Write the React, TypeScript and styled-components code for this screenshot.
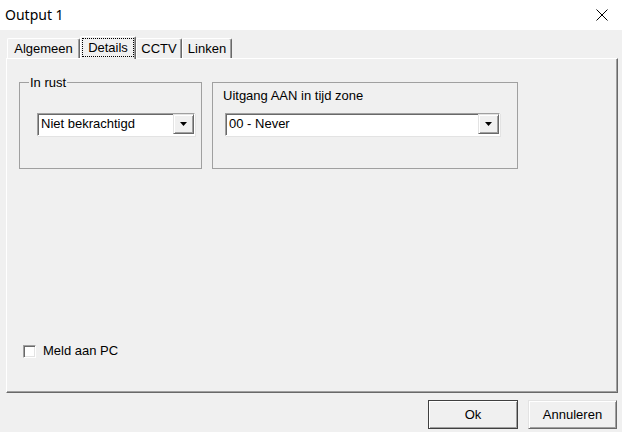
import React from 'react';
import styled, { createGlobalStyle } from 'styled-components';

const GlobalStyle = createGlobalStyle`
  body {
    margin: 0;
    font-family: "Liberation Sans", Arial, sans-serif;
    font-size: 13px;
    color: #000;
  }
  * {
    box-sizing: border-box;
  }
`;

const Window = styled.div`
  width: 622px;
  height: 432px;
  display: flex;
  flex-direction: column;
  background: #f0f0f0;
  overflow: hidden;
`;

const TitleBar = styled.div`
  height: 30px;
  background: #fff;
  display: flex;
  align-items: center;
  justify-content: space-between;
  padding: 0 14px 0 5px;
`;

const Title = styled.div`
  font-family: "Noto Sans", "Open Sans", sans-serif;
  font-size: 14px;
  line-height: 18px;
`;

const Body = styled.div`
  flex: 1;
  display: flex;
  flex-direction: column;
  padding: 6px 4px 0 6px;
`;

const TabStrip = styled.div`
  height: 22px;
  display: flex;
  align-items: flex-end;
  padding-left: 1px;
  position: relative;
  z-index: 1;
`;

const Tab = styled.div<{ $width: number; $active?: boolean }>`
  width: ${p => p.$width}px;
  height: ${p => (p.$active ? 23 : 20)}px;
  margin-bottom: ${p => (p.$active ? -1 : 0)}px;
  background: #f0f0f0;
  border-top: 1px solid #fff;
  border-left: 1px solid #fff;
  border-right: 1px solid #696969;
  box-shadow: inset -1px 0 0 #a0a0a0;
  border-radius: 2px 2px 0 0;
  display: flex;
  align-items: center;
  justify-content: center;
  padding: ${p => (p.$active ? '0 1px 2px 1px' : '0')};
  line-height: 15px;
  white-space: nowrap;
`;

const FocusLabel = styled.span`
  flex: 1;
  align-self: stretch;
  display: flex;
  align-items: center;
  justify-content: center;
  border: 1px dotted #000;
  margin: 1px 0 0 0;
`;

const Panel = styled.div`
  width: 612px;
  height: 335px;
  border-top: 1px solid #fff;
  border-left: 1px solid #fff;
  border-right: 1px solid #696969;
  border-bottom: 1px solid #696969;
  box-shadow: inset -1px -1px 0 #a0a0a0;
  display: flex;
  flex-direction: column;
  padding: 23px 0 33px 12px;
`;

const GroupRow = styled.div`
  display: flex;
  gap: 10px;
`;

const Group = styled.div<{ $width: number }>`
  position: relative;
  width: ${p => p.$width}px;
  height: 87px;
  border: 1px solid #a0a0a0;
  display: flex;
  flex-direction: column;
  align-items: flex-start;
`;

const Legend = styled.span`
  position: absolute;
  top: -8px;
  left: 9px;
  padding: 0 1px;
  background: #f0f0f0;
  line-height: 15px;
`;

const GroupLabel = styled.div`
  line-height: 15px;
  margin: 5px 0 10px 10px;
`;

const Select = styled.div<{ $width: number; $left: number; $top: number }>`
  width: ${p => p.$width}px;
  height: 23px;
  margin: ${p => p.$top}px 0 0 ${p => p.$left}px;
  background: #fff;
  border-top: 1px solid #a0a0a0;
  border-left: 1px solid #a0a0a0;
  border-right: 1px solid #fff;
  border-bottom: 1px solid #fff;
  box-shadow: inset 1px 1px 0 #696969, 1px 1px 0 #e3e3e3;
  display: flex;
  align-items: flex-start;
  padding: 0 0 0 3px;
`;

const SelectText = styled.span`
  flex: 1;
  line-height: 20px;
  white-space: nowrap;
`;

const DropButton = styled.span`
  width: 21px;
  height: 20px;
  background: #f0f0f0;
  border-top: 1px solid #e3e3e3;
  border-left: 1px solid #e3e3e3;
  border-right: 1px solid #696969;
  border-bottom: 1px solid #696969;
  box-shadow: inset 1px 1px 0 #fff, inset -1px -1px 0 #a0a0a0;
  display: flex;
  align-items: center;
  justify-content: center;
`;

const CheckRow = styled.label`
  margin-top: auto;
  margin-left: 4px;
  display: flex;
  align-items: center;
  gap: 7px;
  line-height: 16px;
`;

const CheckBox = styled.span`
  width: 13px;
  height: 13px;
  background: #fff;
  border-top: 1px solid #a0a0a0;
  border-left: 1px solid #a0a0a0;
  border-right: 1px solid #fff;
  border-bottom: 1px solid #fff;
  box-shadow: inset 1px 1px 0 #696969, inset -1px -1px 0 #e3e3e3;
`;

const ButtonRow = styled.div`
  display: flex;
  justify-content: flex-end;
  gap: 10px;
  padding: 7px 1px 0 0;
`;

const Button = styled.button<{ $width: number; $default?: boolean }>`
  width: ${p => p.$width}px;
  height: 29px;
  font-family: "Liberation Sans", Arial, sans-serif;
  font-size: 13px;
  color: #000;
  background: #f0f0f0;
  padding: 0;
  border: 1px solid ${p => (p.$default ? '#404040' : '#696969')};
  ${p => !p.$default && 'border-top-color: #e3e3e3; border-left-color: #e3e3e3;'}
  box-shadow: inset 1px 1px 0 #fff, inset -1px -1px 0 #a0a0a0;
`;

const DropArrow = () => (
  <svg width="7" height="4" viewBox="0 0 7 4">
    <path d="M0 0h7L3.5 4z" fill="#000" />
  </svg>
);

const CloseIcon = () => (
  <svg width="12" height="12" viewBox="0 0 12 12">
    <path d="M0.5 0.5l11 11M11.5 0.5l-11 11" stroke="#000" strokeWidth="1" fill="none" />
  </svg>
);

const tabs = [
  { label: 'Algemeen', width: 73 },
  { label: 'Details', width: 56, active: true },
  { label: 'CCTV', width: 46 },
  { label: 'Linken', width: 50 },
];

const App: React.FC = () => (
  <>
    <GlobalStyle />
    <Window>
      <TitleBar>
        <Title>Output 1</Title>
        <CloseIcon />
      </TitleBar>
      <Body>
        <TabStrip>
          {tabs.map(t => (
            <Tab key={t.label} $width={t.width} $active={t.active}>
              {t.active ? <FocusLabel>{t.label}</FocusLabel> : t.label}
            </Tab>
          ))}
        </TabStrip>
        <Panel>
          <GroupRow>
            <Group $width={183}>
              <Legend>In rust</Legend>
              <Select $width={158} $left={17} $top={30}>
                <SelectText>Niet bekrachtigd</SelectText>
                <DropButton><DropArrow /></DropButton>
              </Select>
            </Group>
            <Group $width={306}>
              <GroupLabel>Uitgang AAN in tijd zone</GroupLabel>
              <Select $width={275} $left={12} $top={0}>
                <SelectText>00 - Never</SelectText>
                <DropButton><DropArrow /></DropButton>
              </Select>
            </Group>
          </GroupRow>
          <CheckRow>
            <CheckBox />
            Meld aan PC
          </CheckRow>
        </Panel>
        <ButtonRow>
          <Button $width={90} $default>Ok</Button>
          <Button $width={89}>Annuleren</Button>
        </ButtonRow>
      </Body>
    </Window>
  </>
);

export default App;
